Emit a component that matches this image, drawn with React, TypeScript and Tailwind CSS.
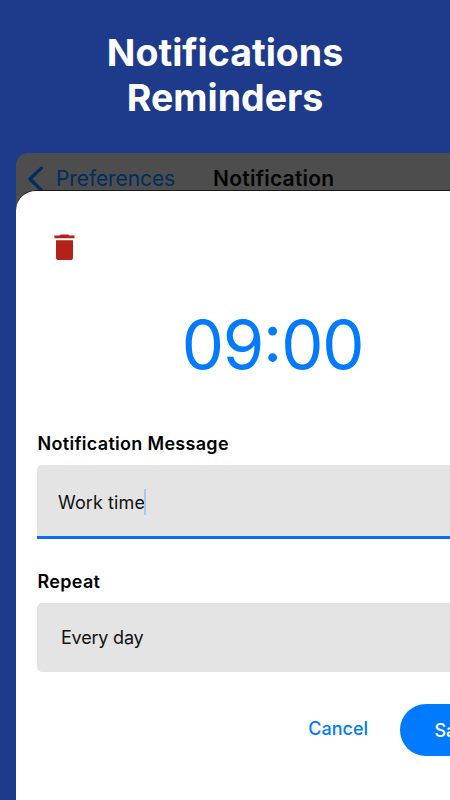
import { ReactNode } from "react";

const App = () => (
  <div className="flex h-[800px] w-full flex-col overflow-hidden bg-[#1e3a8a] font-[Inter,sans-serif]">
    <h1 className="h-[153px] shrink-0 pt-[30px] text-center text-[37.5px] leading-[45px] font-bold text-white">
      Notifications
      <br />
      Reminders
    </h1>
    <div className="ml-4 flex w-[516px] flex-1 flex-col rounded-tl-xl bg-[#4d4d4d]">
      <NavBar />
      <main className="-mt-[14px] flex flex-1 flex-col rounded-tl-[20px] border-t border-[#1a1a1a] bg-white pr-[21px] pl-[21px]">
        <button className="mt-[43px] ml-[17px] h-[26px] w-[21px]" aria-label="Delete">
          <TrashIcon />
        </button>
        <time className="mt-[52px] pr-[3px] text-center text-[67px] leading-[66px] tracking-[-1.2px] text-[#007aff]">
          09<span className="relative -top-[7px]">:</span>00
        </time>
        <Label className="mt-[54px]">Notification Message</Label>
        <div className="mt-[9px] flex h-[74px] items-center rounded-t-[5px] border-b-[3px] border-[#0a6cff] bg-[#e4e4e4] pt-[3px] pl-[21px] text-[18px] tracking-[0.1px] text-[#111]">
          <span>Work time</span>
          <span className="-ml-[1px] h-[26px] w-[2px] bg-[#a9c9f2]" />
        </div>
        <Label className="mt-[31px]">Repeat</Label>
        <div className="mt-[9px] flex h-[69px] items-center rounded-[5px] bg-[#e4e4e4] pl-6 text-[18px] tracking-[-0.2px] text-[#111]">
          Every day
        </div>
        <div className="mt-[32px] flex items-center justify-end gap-8">
          <button className="pb-[3px] text-[18px] font-medium text-[#007aff]">Cancel</button>
          <button className="h-[52px] w-[111px] rounded-full bg-[#007aff] text-[18px] font-medium text-white">
            Save
          </button>
        </div>
      </main>
    </div>
  </div>
);

export default App;

const NavBar = () => (
  <header className="flex h-[51px] shrink-0 items-center pl-3">
    <svg className="h-[26px] w-4" viewBox="0 0 16 26" fill="none">
      <path
        d="M13.4 2.2 2 13l11.4 11.2"
        stroke="#002d5e"
        strokeWidth="3.2"
        strokeLinecap="round"
        strokeLinejoin="round"
      />
    </svg>
    <span className="ml-3 w-[157px] pt-[1px] text-[21px] tracking-[-0.1px] text-[#002d5e]">
      Preferences
    </span>
    <span className="pt-[1px] text-[21px] font-semibold tracking-[0.25px] text-[#050505]">
      Notification
    </span>
  </header>
);

const TrashIcon = () => (
  <svg className="h-[26px] w-[21px]" viewBox="0 0 21 26" fill="#b3211b">
    <path d="M.4 1.5h5.1L6.9.4h7.1l1.4 1.1h5.1v2.8H.4z" />
    <path d="M2 6.2h17v17.2a2.6 2.6 0 0 1-2.6 2.6H4.6A2.6 2.6 0 0 1 2 23.4z" />
  </svg>
);

const Label = ({
  children,
  className,
}: {
  children: ReactNode;
  className: string;
}) => (
  <label
    className={`pl-[0.5px] text-[18px] leading-[24px] font-semibold tracking-[0.3px] text-black ${className}`}
  >
    {children}
  </label>
);
